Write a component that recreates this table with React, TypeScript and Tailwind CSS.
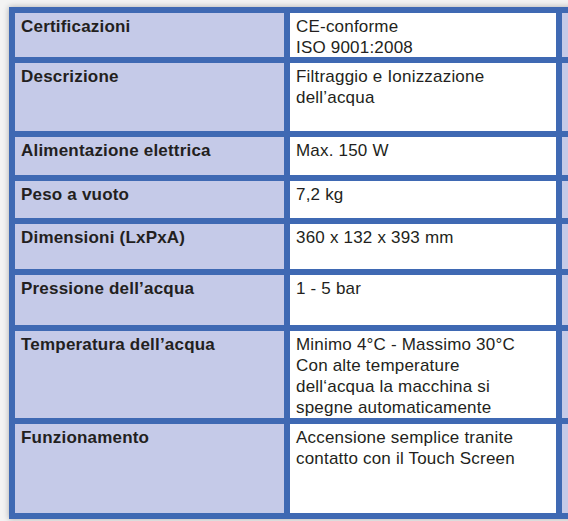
import React from "react";

const rows: { label: string; value: string[]; h: number }[] = [
  { label: "Certificazioni", value: ["CE-conforme", "ISO 9001:2008"], h: 44 },
  { label: "Descrizione", value: ["Filtraggio e Ionizzazione", "dell’acqua"], h: 68 },
  { label: "Alimentazione elettrica", value: ["Max. 150 W"], h: 38 },
  { label: "Peso a vuoto", value: ["7,2 kg"], h: 37 },
  { label: "Dimensioni (LxPxA)", value: ["360 x 132 x 393 mm"], h: 45 },
  { label: "Pressione dell’acqua", value: ["1 - 5 bar"], h: 50 },
  {
    label: "Temperatura dell’acqua",
    value: [
      "Minimo 4°C - Massimo 30°C",
      "Con alte temperature",
      "dell‘acqua la macchina si",
      "spegne automaticamente",
    ],
    h: 87,
  },
  {
    label: "Funzionamento",
    value: ["Accensione semplice tranite", "contatto con il Touch Screen"],
    h: 89,
  },
];

export default function App() {
  return (
    <div
      className="w-[568px] h-[521px] overflow-hidden bg-[#f3f3f3] pl-[9px] pt-[7px]"
      style={{ fontFamily: '"Liberation Sans", Arial, sans-serif' }}
    >
      <div className="w-[700px] bg-[#3f69b3] p-[6px] shadow-[0_0_6px_rgba(0,0,0,0.3)] flex flex-col gap-[6px]">
        {rows.map((r) => (
          <div key={r.label} className="flex gap-[6px]" style={{ height: r.h }}>
            <div className="w-[269px] shrink-0 bg-[#c5cae8] pl-[6px] pt-[3px] text-[17px] leading-[21px] font-bold text-[#231f20] tracking-[0.2px]">
              {r.label}
            </div>
            <div className="w-[266px] shrink-0 bg-white pl-[6px] pt-[3px] text-[17px] leading-[21px] text-[#231f20] tracking-[0.2px]">
              {r.value.map((v) => (
                <div key={v}>{v}</div>
              ))}
            </div>
            <div className="flex-1 bg-[#c5cae8]" />
          </div>
        ))}
      </div>
    </div>
  );
}
